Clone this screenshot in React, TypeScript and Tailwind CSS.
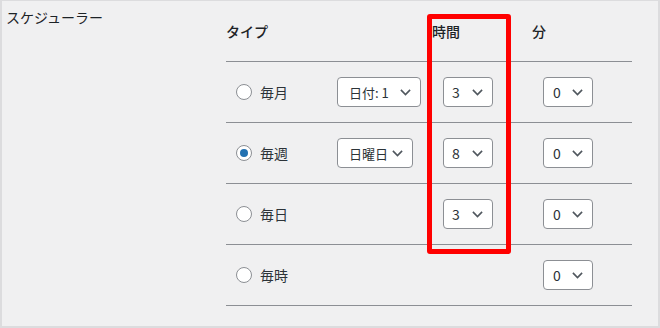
import React from "react";

const Chevron = () => (
  <svg width="11" height="7" viewBox="0 0 11 7" className="shrink-0">
    <polyline points="0.9,0.9 5.5,5.5 10.1,0.9" fill="none" stroke="#50575e" strokeWidth="1.6" />
  </svg>
);

const Select = ({ value, w, pl, size }: { value: string; w: string; pl: string; size: string }) => (
  <div
    className={`${w} ${pl} ${size} h-[30px] flex items-center justify-between pr-[9px] bg-white border border-[#8c8f94] rounded-[4px] text-[#2c3338]`}
  >
    <span className="leading-none">{value}</span>
    <Chevron />
  </div>
);

const Radio = ({ checked }: { checked?: boolean }) => (
  <div className="w-4 h-4 rounded-full border border-[#8c8f94] bg-white flex items-center justify-center shrink-0">
    {checked && <div className="w-2 h-2 rounded-full bg-[#2271b1]" />}
  </div>
);

type Row = { label: string; checked?: boolean; type?: React.ReactNode; hour?: string; min: string };

const rows: Row[] = [
  { label: "毎月", type: <Select value="日付: 1" w="w-[84px]" pl="pl-[11px]" size="text-[13px]" />, hour: "3", min: "0" },
  { label: "毎週", checked: true, type: <Select value="日曜日" w="w-[76px]" pl="pl-[11px]" size="text-[13px]" />, hour: "8", min: "0" },
  { label: "毎日", hour: "3", min: "0" },
  { label: "毎時", min: "0" },
];

export default function App() {
  return (
    <div
      className="relative w-[660px] h-[328px] bg-[#f0f0f1] border-t border-l-2 border-r-2 border-b-2 border-[#dcdcde] flex text-[#1d2327] overflow-hidden"
      style={{ fontFamily: '"Noto Sans CJK JP", "Noto Sans", sans-serif' }}
    >
      <div className="w-[224px] shrink-0 pl-[4px] pt-[6px] text-[14px] leading-[20px]">スケジューラー</div>
      <div className="w-[406px] flex flex-col">
        <div className="grid grid-cols-[101px_105px_100px_100px] h-[60px] items-center text-[14px] leading-[20px] font-medium">
          <div>タイプ</div>
          <div></div>
          <div>時間</div>
          <div>分</div>
        </div>
        {rows.map((r) => (
          <div
            key={r.label}
            className="grid grid-cols-[101px_105px_100px_100px] h-[61px] items-center border-t border-[#8c8f94] text-[14px] leading-[20px]"
          >
            <div className="flex items-center gap-[8px] pl-[10px]">
              <Radio checked={r.checked} />
              <span className="text-[#2c3338]">{r.label}</span>
            </div>
            <div className="pl-[10px]">{r.type}</div>
            <div className="pl-[11px]">
              {r.hour && <Select value={r.hour} w="w-[50px]" pl="pl-[8px]" size="text-[14px]" />}
            </div>
            <div className="pl-[11px]">
              <Select value={r.min} w="w-[50px]" pl="pl-[9px]" size="text-[14px]" />
            </div>
          </div>
        ))}
        <div className="border-t border-[#8c8f94]" />
      </div>
      <div className="absolute left-[425px] top-[13px] w-[84px] h-[240px] border-[5px] border-[#ff0000] rounded-[3px]" />
    </div>
  );
}
